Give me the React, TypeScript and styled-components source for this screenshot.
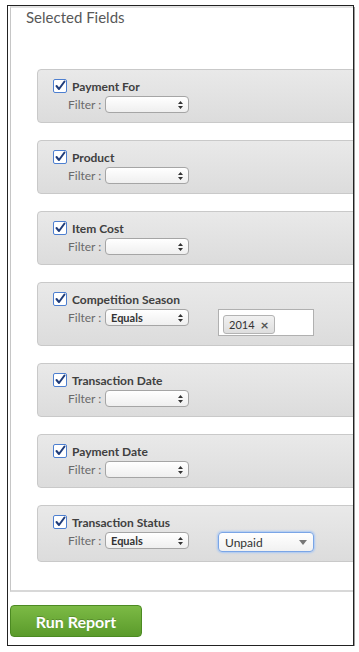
import React from 'react';
import styled, { createGlobalStyle } from 'styled-components';

const GlobalStyle = createGlobalStyle`
  body {
    margin: 0;
    background: #fff;
    font-family: Lato, "Open Sans", sans-serif;
  }
`;

const Frame = styled.div`
  margin: 5px 0 0 7px;
  width: 343px;
  height: 639px;
  border: 1px solid #222;
  box-shadow: 1px 2px 0 #9a9a9a;
  overflow: hidden;
  padding-left: 2px;
`;

const Panel = styled.div`
  width: 360px;
  border-left: 1px solid #c6c6c6;
  border-top: 2px solid #e2e2e2;
  border-bottom: 2px solid #d8d8d8;
  padding: 0 0 28px 0;
`;

const Heading = styled.div`
  margin: 0 0 0 15px;
  font-size: 15px;
  line-height: 18px;
  color: #585858;
`;

const FieldList = styled.div`
  margin: 43px 0 0 26px;
  display: flex;
  flex-direction: column;
  gap: 17px;
`;

const Card = styled.div`
  width: 330px;
  border: 1px solid #c9c9c9;
  border-radius: 4px;
  background: linear-gradient(#e9e9e9, #dcdcdc);
  padding: 9px 0 9px 15px;
`;

const LabelRow = styled.div`
  display: flex;
  align-items: center;
  gap: 5px;
  height: 14px;
`;

const Box = styled.span`
  width: 12px;
  height: 12px;
  border: 1px solid #4d7fd0;
  border-radius: 2px;
  background: #fff;
  display: flex;
  align-items: center;
  justify-content: center;
`;

const FieldName = styled.span`
  font-size: 12px;
  font-weight: 700;
  color: #404040;
`;

const FilterRow = styled.div`
  display: flex;
  align-items: flex-start;
  margin: 3px 0 0 15px;
`;

const FilterLabel = styled.span`
  font-size: 12px;
  line-height: 17px;
  color: #6a6a6a;
  width: 37px;
`;

const Select = styled.div`
  width: 72px;
  height: 15px;
  border: 1px solid #a5a5a5;
  border-radius: 4px;
  background: linear-gradient(#ffffff, #efefef);
  display: flex;
  align-items: center;
  justify-content: space-between;
  padding: 0 5px 0 5px;
  box-sizing: content-box;
  font-size: 11px;
  font-weight: 700;
  color: #333;
  margin-right: 29px;
`;

const TagBox = styled.div`
  width: 90px;
  height: 22px;
  border: 1px solid #b0b0b0;
  background: #fff;
  padding: 3px 0 0 4px;
`;

const Tag = styled.span`
  display: inline-flex;
  align-items: center;
  gap: 6px;
  height: 17px;
  padding: 0 5px;
  border: 1px solid #b3b3b3;
  border-radius: 3px;
  background: linear-gradient(#f1f1f1, #dedede);
  font-size: 11px;
  color: #333;
`;

const TagX = styled.span`
  font-size: 14px;
  line-height: 14px;
  font-weight: 700;
  color: #555;
`;

const Dropdown = styled.div`
  width: 82px;
  height: 18px;
  border: 1px solid #7aa5e6;
  border-radius: 4px;
  box-shadow: 0 0 2px 1px #a9c8f5;
  background: linear-gradient(#ffffff, #f1f1f1);
  display: flex;
  align-items: center;
  justify-content: space-between;
  padding: 0 6px;
  font-size: 12px;
  color: #333;
`;

const RunButton = styled.button`
  margin: 13px 0 0 0;
  width: 132px;
  height: 32px;
  border: 1px solid #4c8a22;
  border-radius: 4px;
  background: linear-gradient(#7cba45, #5b9b2b);
  color: #fff;
  font-family: Lato, "Open Sans", sans-serif;
  font-size: 16px;
  font-weight: 700;
  text-shadow: 0 -1px 0 rgba(0, 0, 0, 0.2);
`;

const Check = () => (
  <Box>
    <svg width="12" height="12" viewBox="0 0 12 12">
      <path d="M2.5 6 L5 9 L10.5 1.5" stroke="#1f3c7a" strokeWidth="2" fill="none" strokeLinecap="round" strokeLinejoin="round" />
    </svg>
  </Box>
);

const Arrows = () => (
  <svg width="5" height="8" viewBox="0 0 5 8">
    <path d="M2.5 0 L5 3 L0 3 Z M0 5 L5 5 L2.5 8 Z" fill="#333" />
  </svg>
);

type Field = { name: string; op?: string; extra?: 'tag' | 'dropdown' };

const fields: Field[] = [
  { name: 'Payment For' },
  { name: 'Product' },
  { name: 'Item Cost' },
  { name: 'Competition Season', op: 'Equals', extra: 'tag' },
  { name: 'Transaction Date' },
  { name: 'Payment Date' },
  { name: 'Transaction Status', op: 'Equals', extra: 'dropdown' },
];

export default function App() {
  return (
    <>
      <GlobalStyle />
      <Frame>
        <Panel>
          <Heading>Selected Fields</Heading>
          <FieldList>
            {fields.map((f) => (
              <Card key={f.name}>
                <LabelRow>
                  <Check />
                  <FieldName>{f.name}</FieldName>
                </LabelRow>
                <FilterRow>
                  <FilterLabel>Filter :</FilterLabel>
                  <Select>
                    <span>{f.op || ''}</span>
                    <Arrows />
                  </Select>
                  {f.extra === 'tag' && (
                    <TagBox>
                      <Tag>
                        2014 <TagX>×</TagX>
                      </Tag>
                    </TagBox>
                  )}
                  {f.extra === 'dropdown' && (
                    <Dropdown>
                      <span>Unpaid</span>
                      <svg width="8" height="5" viewBox="0 0 8 5">
                        <path d="M0 0 L8 0 L4 5 Z" fill="#777" />
                      </svg>
                    </Dropdown>
                  )}
                </FilterRow>
              </Card>
            ))}
          </FieldList>
        </Panel>
        <RunButton>Run Report</RunButton>
      </Frame>
    </>
  );
}
